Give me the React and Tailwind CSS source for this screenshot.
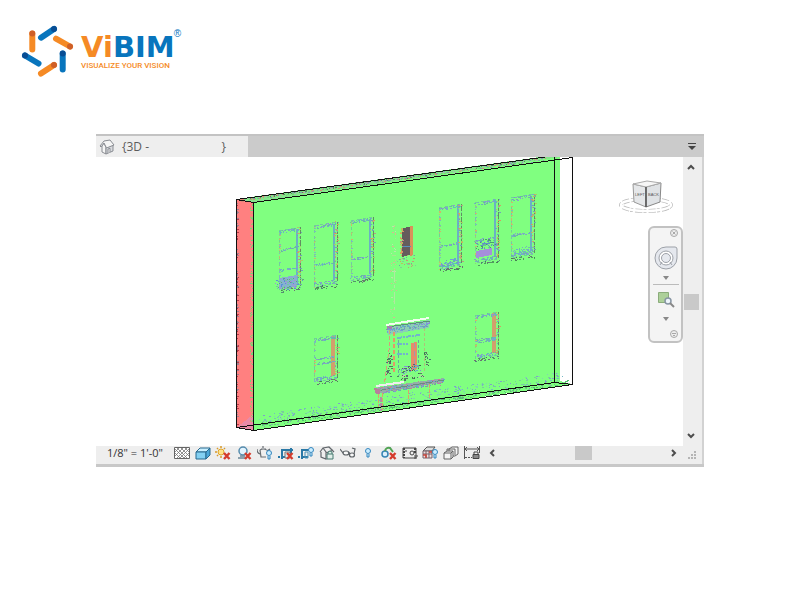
import { Fragment } from 'react'

// Small seeded generator so the scan noise is the same on every render
const makeRandom = (seed) => {
  let s = seed * 7919 + 17
  return () => {
    s = (s * 16807) % 2147483647
    return s / 2147483647
  }
}

const BLUES = ['#6f9fd8', '#5fb0c8', '#8a8fd8', '#6aa8b0']
const WARM = ['#e0905c', '#d9a05a', '#c98a80', '#b8c060']
const DARK = ['#3f6b4a', '#50707a', '#6a5a70', '#4a8a5a']

const Speckle = ({ x1, y1, x2, y2, spread = 1, density = 0.6, colors = BLUES, seed = 1 }) => {
  const random = makeRandom(seed + Math.round(x1 * 3 + y1 * 5))
  const length = Math.hypot(x2 - x1, y2 - y1)
  const count = Math.round(length * density)
  const paths = colors.map(() => '')
  for (let i = 0; i < count; i++) {
    const t = random()
    const x = Math.round(x1 + (x2 - x1) * t + (random() - 0.5) * spread)
    const y = Math.round(y1 + (y2 - y1) * t + (random() - 0.5) * spread)
    const w = random() > 0.6 ? 2 : 1
    paths[Math.floor(random() * colors.length)] += `M${x} ${y}h${w}v1h-${w}z`
  }
  return paths.map((d, i) => <path key={i} d={d} fill={colors[i]} />)
}

const ScanWindow = ({ x, y, w, h, bars = [], warm }) => {
  const right = x + w
  const rise = 4
  return (
    <g opacity="0.85">
      <path d={`M${x} ${y}L${right} ${y - rise}V${y + h - rise}L${x} ${y + h}z`} fill="none" stroke="#6fc89c" strokeWidth="1" strokeDasharray="3 3" />
      <path d={`M${right - 3} ${y - rise + 2}V${y + h - rise - 3}`} stroke="#68a3d0" strokeWidth="2" />
      {warm && <path d={`M${right - 4} ${y - rise + 1}V${y + h - rise - 2}`} stroke="#e08f6a" strokeWidth="4" />}
      <path d={`M${right} ${y - rise}V${y + h - rise}`} stroke="#5d7c5c" strokeWidth="1" strokeDasharray="7 2 3 1" />
      <Speckle x1={x} y1={y + 1} x2={right} y2={y - rise + 1} spread={3} density={1.6} />
      <Speckle x1={x} y1={y} x2={x} y2={y + h} density={0.7} colors={['#e0a868', '#9ac878', '#78b0c8']} />
      <Speckle x1={right - 1} y1={y - rise} x2={right - 1} y2={y + h - rise} spread={4} density={0.7} colors={[...WARM, '#6f8fc8']} />
      <Speckle x1={x} y1={y + h - 3} x2={right - 2} y2={y + h - rise - 2} spread={3} density={1.8} />
      <Speckle x1={x} y1={y + h + 1} x2={right} y2={y + h - rise + 2} spread={3} density={1} colors={DARK} />
      {bars.map((bar) => (
        <Speckle key={bar} x1={x + 1} y1={y + bar} x2={right - 3} y2={y + bar - 3} spread={2} density={1.5} />
      ))}
    </g>
  )
}

const Fireplace = () => (
  <g>
    <path d="M387 327L429 320V328L388 335z" fill="#8bcfb4" />
    <path d="M386 325L429 318" stroke="#f1fff0" strokeWidth="2" />
    <path d="M387 327L430 321" stroke="#5d8f78" strokeWidth="1" />
    <path d="M387 326H392V330H387z" fill="#a57fae" />
    <Speckle x1={388} y1={330} x2={428} y2={324} spread={5} density={2.5} />
    <path d="M394 332V374" stroke="#e49a67" strokeWidth="2" strokeDasharray="4 2" />
    <path d="M389 330V350L384 387" fill="none" stroke="#d59f78" strokeWidth="1" strokeDasharray="4 2" />
    <path d="M424 328V372" stroke="#b0c078" strokeWidth="1" strokeDasharray="3 2" />
    <path d="M397 338L420 335M397 344H408M397 354H408" stroke="#72b3ce" strokeWidth="2" strokeDasharray="5 1 2 1" />
    <path d="M411 343L417 342V369L411 371z" fill="#e58d69" />
    <path d="M414 343V370" stroke="#a898a8" strokeWidth="1" strokeDasharray="5 3" />
    <path d="M398 340V376M418 340V370" stroke="#6aa8a0" strokeWidth="1" strokeDasharray="3 2" />
    <Speckle x1={389} y1={354} x2={388} y2={374} spread={5} density={1.8} colors={DARK} />
    <Speckle x1={425} y1={351} x2={428} y2={365} spread={4} density={1.4} colors={DARK} />
    <Speckle x1={399} y1={371} x2={418} y2={367} spread={7} density={3} colors={[...BLUES, ...DARK]} />
    <Speckle x1={396} y1={379} x2={424} y2={374} spread={5} density={1.5} colors={[...DARK, '#b8d8a0']} />
    <path d="M374 388L444 378V382L376 394z" fill="#95ada8" />
    <path d="M376 386L404 382" stroke="#eeeeee" strokeWidth="2" />
    <path d="M376 391L444 380" stroke="#6a8c80" strokeWidth="1" />
    <Speckle x1={376} y1={391} x2={442} y2={381} spread={6} density={2} colors={[...BLUES, '#a07fb0', '#c47f98', '#7f9c98']} />
    <path d="M374 388L380 389V394H376z" fill="#b87f9c" />
    <path d="M378 394V408M382 393V410M429 384V399M408 390V403" stroke="#dba268" strokeWidth="1" strokeDasharray="4 1" />
    <path d="M381 397V411" stroke="#b08fa8" strokeWidth="2" strokeDasharray="5 1" />
  </g>
)

const WallModel = () => (
  <svg className="block h-[289px] w-full" viewBox="96 157 587 289" shapeRendering="crispEdges" role="img" aria-label="3D view of scanned wall">
    <path d="M254 202L554 157H560V381L572 384L254 430z" fill="#80ff80" />
    <path d="M236 199L540 157H560L254 202z" fill="#85e58b" />
    <path d="M236 200L254 202V430L236 428z" fill="#ff8080" />
    <path d="M236 428L254 414V430z" fill="#e88aa8" />
    <Speckle x1={237} y1={200} x2={545} y2={158} spread={3} density={1.5} colors={['#568a62', '#a7bdb0', '#d88a78', '#7fa0b0', '#72d878']} />
    <Speckle x1={262} y1={418} x2={560} y2={376} spread={9} density={1.1} colors={['#76b8c4', '#78cf9c', '#7fa2c8', '#80d8ae']} />
    <Speckle x1={262} y1={424} x2={568} y2={382} spread={4} density={1.2} colors={['#5ccf78', '#82b8a0', '#55bd72']} />
    <Speckle x1={251} y1={204} x2={251} y2={426} spread={3} density={0.9} colors={['#a2c26c', '#d8a070', '#70d878']} />
    <Speckle x1={237} y1={202} x2={237} y2={426} spread={1} density={0.5} colors={['#b83c4c', '#a08090']} />
    <Speckle x1={393} y1={222} x2={393} y2={318} spread={6} density={0.5} colors={['#a8e890', '#b8e8a8', '#d8b890']} />
    <path d="M394 270V311" stroke="#b0e8a0" strokeWidth="1" strokeDasharray="12 3 3 4" />

    <ScanWindow x={279} y={231} w={21} h={59} bars={[19, 39]} />
    <path d="M279 278L297 275V286L279 289z" fill="#85b2d0" />
    <Speckle x1={279} y1={284} x2={297} y2={281} spread={12} density={5} colors={['#5a8fd8', '#60a878', '#a48fd8', '#70c8a0']} />
    <ScanWindow x={314} y={226} w={23} h={61} bars={[39]} />
    <ScanWindow x={351} y={221} w={22} h={60} bars={[38]} />
    <path d="M402 228L410 227V255L402 257z" fill="#655c5c" />
    <path d="M410 226L413 226V255L410 256z" fill="#d9915a" />
    <path d="M402 246H411" stroke="#588fc0" strokeWidth="1" />
    <Speckle x1={401} y1={228} x2={401} y2={266} spread={2} density={0.9} colors={WARM} />
    <Speckle x1={402} y1={262} x2={412} y2={260} spread={12} density={3} colors={['#6ab0a0', '#c0a070', '#7fcf98']} />
    <ScanWindow x={439} y={208} w={22} h={61} bars={[38]} />
    <Speckle x1={441} y1={266} x2={457} y2={260} spread={7} density={3} />
    <ScanWindow x={475} y={203} w={23} h={60} bars={[37]} />
    <path d="M476 251L492 248V255L476 258z" fill="#a58fda" />
    <Speckle x1={476} y1={245} x2={492} y2={242} spread={9} density={4} colors={['#4c9b73', '#628fc8', '#66c890']} />
    <ScanWindow x={511} y={198} w={23} h={60} bars={[37]} />
    <Speckle x1={512} y1={253} x2={530} y2={248} spread={6} density={2.5} colors={['#6fbdb0', '#72a8cf']} />
    <ScanWindow x={314} y={339} w={23} h={43} bars={[20, 25]} warm />
    <ScanWindow x={475} y={316} w={23} h={43} bars={[24, 26]} warm />
    <Fireplace />

    <g fill="none" stroke="#101010" strokeWidth="1">
      <path d="M236.5 428V199.500L545 157" />
      <path d="M236.500 199.500L253.500 202.500L572.500 157.500V384.500L253.500 430.500L236.500 427.500L554.500 382.500L572.500 384.500" />
      <path d="M253.500 202V430M554.500 157V382" />
    </g>
  </svg>
)

const Logo = () => (
  <a href="#home" className="flex items-start" aria-label="ViBIM home">
    <svg className="h-[54px] w-[54px] shrink-0" viewBox="20 24 54 54" strokeWidth="6" strokeLinecap="round">
      <path d="M32.300 33.500V49.500M56 38.700L70 46.500M41 73.500L54 65" stroke="#f58a25" />
      <path d="M41 37.700L54 29M62.700 53.500V69.500M25 55.500L38.500 63.500" stroke="#0875bd" />
      <path d="M32.300 33.500h.01M70 46.500h.01M54 65h.01" stroke="#cf5f27" />
      <path d="M54 29h.01M62.700 53.500h.01M25 55.500h.01" stroke="#084d94" />
    </svg>
    <div className="mt-2 ml-[7px]">
      <div className="flex items-start">
        <span className="font-['DejaVu_Sans'] text-[29px] leading-[30px] font-bold text-[#0875bd]">
          <span className="text-[#f58a25]">Vi</span>BIM
        </span>
        <span className="-mt-1 -ml-px font-['Liberation_Sans'] text-[10px] leading-3 text-[#0875bd]">®</span>
      </div>
      <p className="font-['Roboto'] text-[8px] leading-2 font-medium whitespace-nowrap text-[#f58a25]">VISUALIZE YOUR VISION</p>
    </div>
  </a>
)

const HouseIcon = () => (
  <svg className="h-4 w-4" viewBox="0 0 16 16" fill="#f5f5f5" stroke="#8a8d93" strokeWidth="1" strokeLinejoin="round">
    <path d="M3 7V13L7 15V8.500L5 4z" />
    <path d="M7 8.500V15L14 12V6z" fill="#d8dade" />
    <path d="M1 7L5 2L11 1L15 6L7.500 9L5 4L2 8z" />
    <path d="M9 14V10L11 9.300V13" />
  </svg>
)

const RedX = () => <path d="M9 8L14.500 14M14.500 8L9 14" stroke="#d43c2d" strokeWidth="2.400" />
const Bulb = ({ x = 10, y = 7 }) => (
  <g stroke="#3586bd" fill="#cceeff">
    <circle cx={x + 2} cy={y + 1} r="2.500" />
    <path d={`M${x + 1} ${y + 4}v3h2v-3`} />
  </g>
)

const TOOLS = [
  { label: 'Detail level', art: (
    <>
      <path d="M.5 2.500h15v11H.5z" fill="#fff" stroke="#666" />
      <path d="M1 4l9 9M1 8l5 5M3 3l10 10M7 3l8 8M11 3l4 4M15 4l-9 9M15 8l-5 5M13 3L3 13M9 3L1 11M5 3L1 7" stroke="#777" strokeWidth="0.800" />
    </>
  ) },
  { label: 'Visual style', art: (
    <g stroke="#27698f" strokeLinejoin="round">
      <path d="M1 7L5 3H15L11 7z" fill="#c8efff" />
      <path d="M1 7H11V14H1z" fill="#83d0f2" />
      <path d="M11 7L15 3V10L11 14z" fill="#4ca7d8" />
    </g>
  ) },
  { label: 'Sun path', art: (
    <>
      <circle cx="6" cy="7" r="3" fill="#ffe48a" stroke="#e0a42c" />
      <path d="M6 1v2M6 11v2M0 7h2M2 3l1 1M10 3l-1 1M2 11l1-1" stroke="#d99b28" strokeWidth="1.500" />
      <RedX />
    </>
  ) },
  { label: 'Shadows', art: (
    <>
      <circle cx="7" cy="6" r="4" fill="#e2f4ff" stroke="#558bad" strokeWidth="1.500" />
      <path d="M2 13h7M4 11h5" stroke="#6b8798" strokeWidth="1.500" />
      <RedX />
    </>
  ) },
  { label: 'Rendering', art: (
    <>
      <path d="M3 5Q6 3 10 5M3 5L4 12H9M3 9Q0 8 0 4M6 3V1M4 4h5M10 6l3-2" fill="none" stroke="#676d72" strokeWidth="1.200" />
      <Bulb x={10} y={7} />
    </>
  ) },
  { label: 'Crop view', art: (
    <>
      <path d="M4 14V5H15M0 12H2M5 12H9M13 3V9" fill="none" stroke="#2a78a6" strokeWidth="2" />
      <path d="M7 7h5v6H7z" fill="#d9edf7" stroke="#777" />
      <RedX />
    </>
  ) },
  { label: 'Crop region', art: (
    <>
      <path d="M4 14V5H11M0 12H2M5 12H10" fill="none" stroke="#2a78a6" strokeWidth="2" />
      <path d="M7 7h3v6H7z" fill="none" stroke="#4a91b5" />
      <Bulb x={11} y={4} />
    </>
  ) },
  { label: 'Locked 3D view', art: (
    <>
      <path d="M1 7L4 3L10 2L15 7M2 7V12L7 14V7L4 3M7 8L14 5" fill="none" stroke="#63686d" strokeWidth="1.200" />
      <path d="M8 9h6v5H8zM9 9V7q2-2 4 0v2" fill="#e0eee8" stroke="#467b70" />
    </>
  ) },
  { label: 'Hide or isolate', art: (
    <g fill="#f8f8f8" stroke="#5d6266" strokeWidth="1.200">
      <ellipse cx="6" cy="8" rx="3" ry="2" />
      <ellipse cx="12" cy="10" rx="2.500" ry="2" />
      <path d="M3 8L0 4M8 8q1-1 2 1M14 9l1-5-3-1" fill="none" />
    </g>
  ) },
  { label: 'Reveal hidden elements', art: <Bulb x={6} y={5} /> },
  { label: 'Worksharing display', art: (
    <>
      <circle cx="4" cy="9" r="3" fill="#dceffc" stroke="#3785b4" strokeWidth="1.500" />
      <path d="M4 6Q5 2 9 3L12 7" fill="none" stroke="#51a354" strokeWidth="2" />
      <RedX />
    </>
  ) },
  { label: 'View properties', art: (
    <g fill="none" stroke="#444">
      <path d="M1 3h13v10H1z" />
      <path d="M2 3v10M13 3v5" strokeWidth="2" strokeDasharray="2 1" />
      <circle cx="10" cy="8" r="2" />
      <path d="M12 11h4M12 13h3M3 6h2" />
    </g>
  ) },
  { label: 'Analytical model', art: (
    <>
      <path d="M1 6L5 2H13L10 6z" fill="#ddd" stroke="#555" />
      <path d="M1 6h9v7H1zM4 6v7M7 6v7M1 9h9" fill="#f0dedd" stroke="#75606a" />
      <path d="M1 10h3v3M7 7h3" stroke="#c6453c" strokeWidth="1.500" />
      <Bulb x={11} y={6} />
    </>
  ) },
  { label: 'Displacement sets', art: (
    <g fill="#f4f4f4" stroke="#656565" strokeLinejoin="round">
      <path d="M6 4L9 2H15V9L12 11H6z" />
      <path d="M1 8L4 6H10V12L8 14H1z" />
      <path d="M1 8h7v6M8 8l2-2M4 6V4h8v6" fill="none" />
    </g>
  ) },
  { label: 'Reveal constraints', art: (
    <>
      <path d="M.5 1v13M15.500 1v7M1 4h14" fill="none" stroke="#555" />
      <path d="M3 2L1 4l2 2M13 2l2 2-2 2" fill="none" stroke="#555" />
      <path d="M1 12.500h7" stroke="#555" strokeDasharray="2 1" />
      <path d="M9 9.500h6v4H9z" fill="#888" stroke="#444" />
      <path d="M10 9V7h4v2" fill="none" stroke="#444" />
    </>
  ) },
]

const Chevron = ({ d }) => (
  <svg className="h-2 w-2" viewBox="0 0 8 8" fill="none" stroke="#4d4d4d" strokeWidth="2">
    <path d={d} />
  </svg>
)

const Caret = () => (
  <svg className="h-1 w-1.5" viewBox="0 0 6 4"><path d="M0 0h6L3 4z" fill="#888" /></svg>
)

const ViewCube = () => (
  <svg className="absolute top-5 right-2 h-10 w-14" viewBox="619 177 56 40" aria-label="View cube" role="img">
    <ellipse cx="646" cy="205" rx="25" ry="6" fill="none" stroke="#bdbdbd" strokeWidth="4" strokeDasharray="3 1 7 2" />
    <ellipse cx="646" cy="205" rx="25" ry="6" fill="none" stroke="#fff" strokeWidth="2.500" />
    <path d="M633 184L646 187V207L634 202z" fill="#e5e7e9" stroke="#999" />
    <path d="M646 187L661 183L660 202L646 207z" fill="#dfe2e5" stroke="#888" />
    <path d="M633 184L647 181L661 183L646 187z" fill="#f6f6f6" stroke="#aaa" />
    <path d="M646 187V207" stroke="#555" strokeWidth="1.500" />
    <text x="635" y="196" className="font-['Liberation_Sans'] text-[4px]" fill="#555">LEFT</text>
    <text x="648" y="196" className="font-['Liberation_Sans'] text-[4px]" fill="#555">BACK</text>
  </svg>
)

const NavigationBar = () => (
  <nav className="absolute top-[69px] right-0 flex h-[117px] w-[35px] flex-col items-center rounded-md border-2 border-[#c2c2c2] bg-[#f4f4f4]" aria-label="Navigation bar">
    <button type="button" aria-label="Close" className="mr-0.5 self-end">
      <svg className="h-2.5 w-2.5" viewBox="0 0 10 10" fill="#eee" stroke="#a8a8a8"><circle cx="5" cy="5" r="3.500" /><path d="M3.500 3.500l3 3M6.500 3.500l-3 3" /></svg>
    </button>
    <button type="button" aria-label="Steering wheel" className="mt-2">
      <svg className="h-6 w-6" viewBox="0 0 24 24" fill="#e5e8ee" stroke="#9da1a8">
        <path d="M12 1H21Q23 1 23 3V12A11 11 0 1 1 12 1z" />
        <circle cx="12" cy="12" r="7" fill="#fff" />
        <circle cx="12" cy="12" r="4.500" fill="#e6e9ef" />
        <path d="M8 16l-2 3M16 16l2 3" />
      </svg>
    </button>
    <button type="button" aria-label="Wheel options" className="mt-1.5 flex"><Caret /></button>
    <hr className="mt-1 w-[26px] border-[#bbb]" />
    <button type="button" aria-label="Zoom region" className="mt-1.5">
      <svg className="h-[18px] w-[18px]" viewBox="0 0 18 18">
        <path d="M1.500 1.500h10v10h-10z" fill="#add09a" stroke="#8bac7b" />
        <circle cx="11" cy="10" r="3" fill="#eef5fb" stroke="#8795a3" strokeWidth="1.500" />
        <path d="M13 12l4 4" stroke="#888" strokeWidth="2" />
      </svg>
    </button>
    <button type="button" aria-label="Zoom options" className="mt-2 flex"><Caret /></button>
    <button type="button" aria-label="Bar options" className="mt-auto mr-0.5 mb-0.5 self-end">
      <svg className="h-2.5 w-2.5" viewBox="0 0 10 10" fill="#eee" stroke="#a8a8a8"><circle cx="5" cy="5" r="3.500" /><path d="M3 4.500h4M4 6.500h2" /></svg>
    </button>
  </nav>
)

const ViewTabs = () => (
  <div className="flex h-[23px] items-stretch justify-between border-t-2 border-[#c3c3c3] bg-[#cbcbcb]">
    <button type="button" className="flex w-[152px] items-center bg-[#eeeeee] pl-[3px] text-left text-xs text-[#5c5c5c]">
      <HouseIcon />
      <span className="ml-[7px] whitespace-nowrap">{'{3D -'}</span>
      <span className="ml-auto pr-[22px]">{'}'}</span>
    </button>
    <button type="button" aria-label="Open views" className="flex w-6 items-center justify-center">
      <svg className="h-2 w-2" viewBox="0 0 8 8" fill="#444"><path d="M0 0h8v1H0zM0 3h8L4 7z" /></svg>
    </button>
  </div>
)

const ViewControls = () => (
  <div className="flex h-[18px] items-center bg-[#eeeeee] pr-1 pb-1">
    <button type="button" className="ml-[11px] w-[67px] text-left text-[11px] leading-4 whitespace-nowrap text-[#333]">1/8" = 1'-0"</button>
    <div className="flex w-[306px] justify-between">
      {TOOLS.map(({ label, art }) => (
        <button key={label} type="button" aria-label={label}>
          <svg className="block h-4 w-4" viewBox="0 0 16 16" fill="none">{art}</svg>
        </button>
      ))}
    </div>
    <div className="ml-2 flex flex-1 items-center">
      <button type="button" aria-label="Scroll left"><Chevron d="M6 1L3 4L6 7" /></button>
      <div className="flex h-3.5 flex-1 justify-end pr-[78px]">
        <div className="h-3.5 w-[17px] bg-[#c9c9c9]" />
      </div>
      <button type="button" aria-label="Scroll right"><Chevron d="M2 1L5 4L2 7" /></button>
    </div>
    <svg className="mt-1 ml-2 h-3 w-3" viewBox="0 0 12 12" fill="#b5b5b5">
      {[[8, 2], [5, 5], [8, 5], [2, 8], [5, 8], [8, 8]].map(([x, y]) => (
        <Fragment key={`${x}-${y}`}><path d={`M${x} ${y}h2v2h-2z`} /></Fragment>
      ))}
    </svg>
  </div>
)

const App = () => (
  <div className="min-h-screen bg-white font-['Open_Sans','Noto_Sans',sans-serif]">
    <header className="flex px-5 pt-6">
      <Logo />
    </header>
    <main className="px-24 pt-14">
      <section className="border-b-3 border-[#c8c8c8]">
        <ViewTabs />
        <div className="border-r-2 border-[#d2d2d2]">
          <div className="flex">
            <div className="relative min-w-0 flex-1 bg-white">
              <WallModel />
              <ViewCube />
              <NavigationBar />
            </div>
            <div className="flex w-[19px] flex-col items-center bg-[#eeeeee] py-1.5 pr-[3px]">
              <button type="button" aria-label="Scroll up" className="flex"><Chevron d="M1 6L4 3L7 6" /></button>
              <div className="flex flex-1 items-center">
                <div className="h-4 w-[15px] bg-[#c9c9c9]" />
              </div>
              <button type="button" aria-label="Scroll down" className="flex"><Chevron d="M1 2L4 5L7 2" /></button>
            </div>
          </div>
          <ViewControls />
        </div>
      </section>
    </main>
  </div>
)

export default App
